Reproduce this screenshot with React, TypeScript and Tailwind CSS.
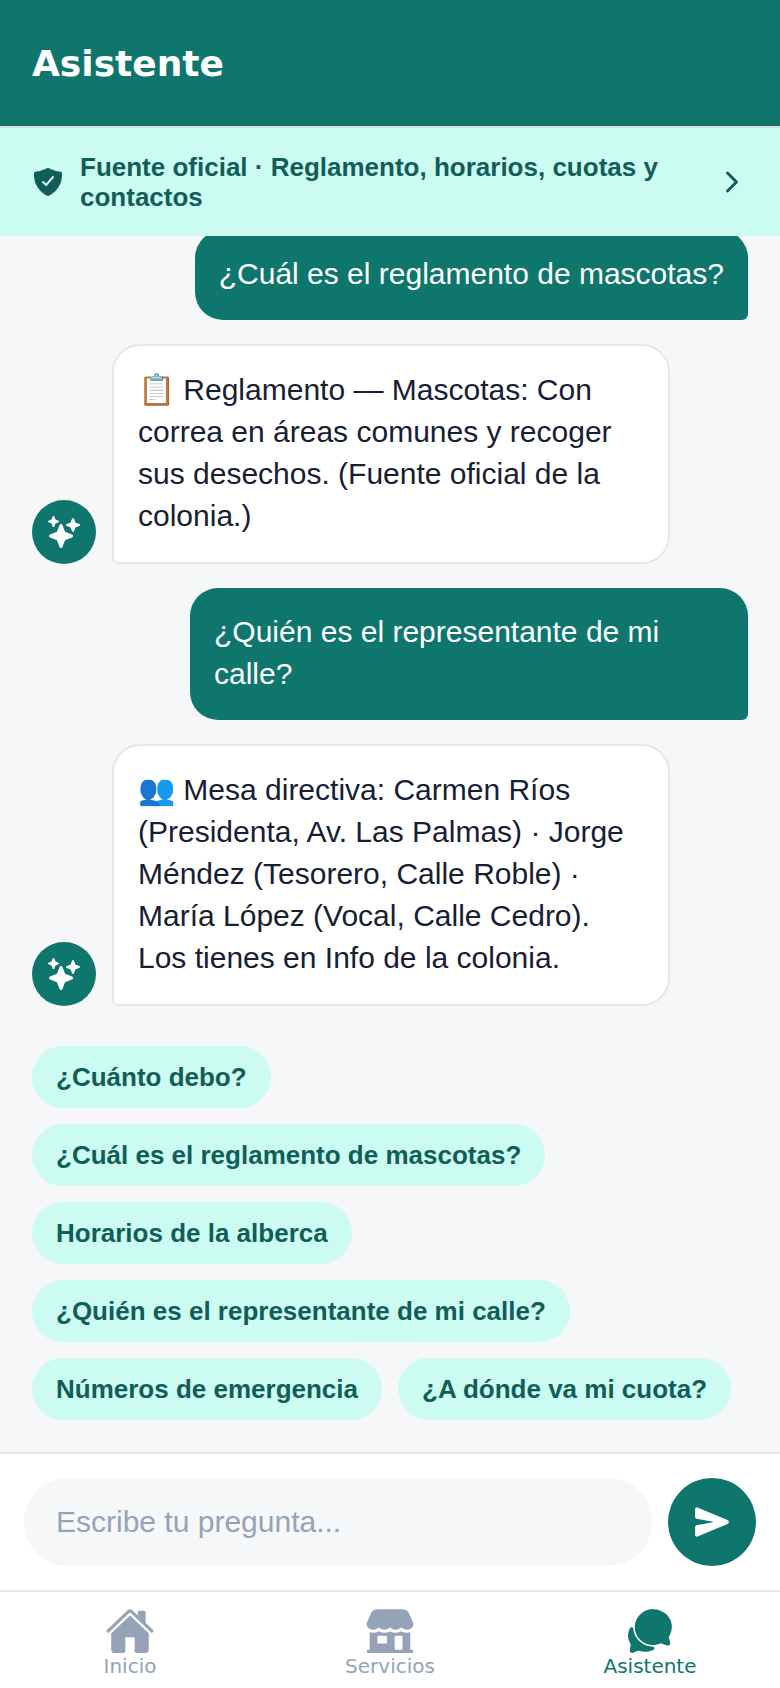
import { IoHome, IoStorefront, IoChatbubbles, IoSend, IoSparkles, IoShieldCheckmark, IoChevronForward } from "react-icons/io5";

const SANS = "font-['Liberation_Sans',Arial,sans-serif]";

function User({ text }: { text: string }) {
  return (
    <div className="flex justify-end shrink-0">
      <div className="max-w-[558px] bg-[#0f766e] text-white text-[30px] leading-[42px] px-6 pt-[23px] pb-[25px] rounded-[28px] rounded-br-[6px]">
        {text}
      </div>
    </div>
  );
}

function Bot({ text }: { text: string }) {
  return (
    <div className="flex items-end gap-4 shrink-0">
      <div className="w-16 h-16 rounded-full bg-[#0f766e] flex items-center justify-center text-white shrink-0">
        <IoSparkles size={32} />
      </div>
      <div className="w-[558px] bg-white border-2 border-[#e5e7eb] text-[#172033] text-[30px] leading-[42px] px-6 pt-[23px] pb-[25px] rounded-[28px] rounded-bl-[6px]">
        {text}
      </div>
    </div>
  );
}

const chips = [
  "¿Cuánto debo?",
  "¿Cuál es el reglamento de mascotas?",
  "Horarios de la alberca",
  "¿Quién es el representante de mi calle?",
  "Números de emergencia",
  "¿A dónde va mi cuota?",
];

function NavItem({ icon, label, active }: { icon: React.ReactNode; label: string; active?: boolean }) {
  return (
    <div className={`flex-1 flex flex-col items-center ${active ? "text-[#0f766e]" : "text-[#94a3b8]"}`}>
      {icon}
      <span className="font-['DejaVu_Sans',sans-serif] text-[20px] leading-[24px] -mt-[2px]">{label}</span>
    </div>
  );
}

export default function App() {
  return (
    <div className={`w-[780px] h-[1688px] flex flex-col overflow-hidden bg-[#f6f7f9] ${SANS}`}>
      <header className="h-[128px] shrink-0 bg-[#0f766e] border-b-2 border-[#d9dde0] flex items-center px-8 pt-[2px]">
        <h1 className="font-['DejaVu_Sans',sans-serif] font-bold text-[36px] text-white">Asistente</h1>
      </header>
      <div className="h-[108px] shrink-0 bg-[#ccfbf1] flex items-center px-8 gap-4 text-[#115e59]">
        <IoShieldCheckmark size={32} className="shrink-0" />
        <div className="flex-1 font-bold text-[26px] leading-[30px]">Fuente oficial · Reglamento, horarios, cuotas y contactos</div>
        <IoChevronForward size={32} className="shrink-0" />
      </div>
      <main className="flex-1 min-h-0 overflow-hidden flex flex-col justify-end gap-6 px-8 pb-8">
        <User text="¿Cuál es el reglamento de mascotas?" />
        <Bot text="📋 Reglamento — Mascotas: Con correa en áreas comunes y recoger sus desechos. (Fuente oficial de la colonia.)" />
        <User text="¿Quién es el representante de mi calle?" />
        <Bot text="👥 Mesa directiva: Carmen Ríos (Presidenta, Av. Las Palmas) · Jorge Méndez (Tesorero, Calle Roble) · María López (Vocal, Calle Cedro). Los tienes en Info de la colonia." />
        <div className="flex flex-wrap gap-4 mt-4 shrink-0">
          {chips.map((c) => (
            <div key={c} className="h-[62px] flex items-center px-6 rounded-full bg-[#ccfbf1] text-[#115e59] font-bold text-[26px]">
              {c}
            </div>
          ))}
        </div>
      </main>
      <div className="h-[138px] shrink-0 bg-white border-t-2 border-[#e5e7eb] flex items-center gap-4 px-6">
        <input
          placeholder="Escribe tu pregunta..."
          className="flex-1 min-w-0 h-[88px] rounded-full bg-[#f6f7f9] px-8 text-[30px] outline-none placeholder:text-[#94a3b8]"
        />
        <div className="w-[88px] h-[88px] rounded-full bg-[#0f766e] flex items-center justify-center text-white shrink-0">
          <IoSend size={36} />
        </div>
      </div>
      <nav className="h-[98px] shrink-0 bg-white border-t-2 border-[#e5e7eb] flex pt-[14px]">
        <NavItem icon={<IoHome size={50} />} label="Inicio" />
        <NavItem icon={<IoStorefront size={50} />} label="Servicios" />
        <NavItem icon={<IoChatbubbles size={50} />} label="Asistente" active />
      </nav>
    </div>
  );
}
